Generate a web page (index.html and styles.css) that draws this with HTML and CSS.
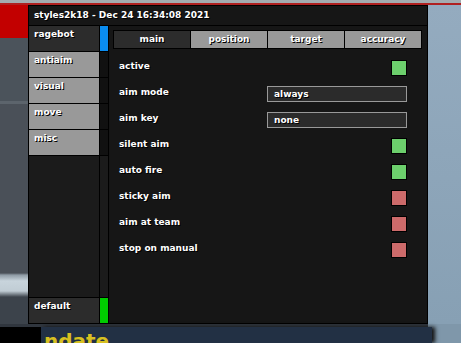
FILE: index.html
```html
<!DOCTYPE html>
<html lang="en">
<head>
    <meta charset="UTF-8">
    <title>styles2k18</title>
    <link rel="stylesheet" href="styles.css">
</head>
<body>
    <div class="top-strip"></div>
    <div class="middle">
        <div class="left-strip"></div>
        <div class="window">
            <div class="title">styles2k18 - Dec 24 16:34:08 2021</div>
            <div class="window-body">
                <div class="sidebar">
                    <div class="tab active"><span class="tab-name">ragebot</span><span class="mark blue"></span></div>
                    <div class="tab"><span class="tab-name">antiaim</span><span class="mark"></span></div>
                    <div class="tab"><span class="tab-name">visual</span><span class="mark"></span></div>
                    <div class="tab"><span class="tab-name">move</span><span class="mark"></span></div>
                    <div class="tab"><span class="tab-name">misc</span><span class="mark"></span></div>
                    <div class="spacer"><span class="tab-name"></span><span class="mark"></span></div>
                    <div class="tab active config"><span class="tab-name">default</span><span class="mark green"></span></div>
                </div>
                <div class="content">
                    <div class="subtabs">
                        <div class="subtab active">main</div>
                        <div class="subtab">position</div>
                        <div class="subtab">target</div>
                        <div class="subtab">accuracy</div>
                    </div>
                    <div class="rows">
                        <div class="row"><span class="label">active</span><span class="check on"></span></div>
                        <div class="row"><span class="label">aim mode</span><span class="select">always</span></div>
                        <div class="row"><span class="label">aim key</span><span class="select">none</span></div>
                        <div class="row"><span class="label">silent aim</span><span class="check on"></span></div>
                        <div class="row"><span class="label">auto fire</span><span class="check on"></span></div>
                        <div class="row"><span class="label">sticky aim</span><span class="check off"></span></div>
                        <div class="row"><span class="label">aim at team</span><span class="check off"></span></div>
                        <div class="row"><span class="label">stop on manual</span><span class="check off"></span></div>
                    </div>
                </div>
            </div>
        </div>
        <div class="right-strip"></div>
    </div>
    <div class="bottom">
        <div class="bottom-box"></div>
        <div class="bottom-panel"><span class="hud-text">ndate</span></div>
    </div>
</body>
</html>
```

FILE: styles.css
```css
/* page backdrop */
body {
    margin: 0;
    padding: 0;
    width: 461px;
    height: 343px;
    overflow: hidden;
    background-color: #8ea6ba;
    font-family: "DejaVu Sans", Verdana, sans-serif;
    font-weight: bold;
    font-size: 9px;
    color: #fff;
}

.top-strip {
    height: 5px;
    background: linear-gradient(to bottom, #a4acb0 0, #a4acb0 3px, #b02020 3px, #b02020 5px);
}

.middle {
    display: flex;
    height: 319px;
}

.left-strip {
    width: 28px;
    background: linear-gradient(to bottom,
        #c20000 0, #c20000 33px,
        #4b535b 33px, #4b535b 96px,
        #5c646c 96px, #5c646c 99px,
        #4a5058 99px, #4a5058 268px,
        #8e9aa4 270px, #c8d4dc 276px, #c0ccd4 286px,
        #3c434b 292px, #3c434b 319px);
}

.right-strip {
    flex: 1;
    background: linear-gradient(to bottom, #94abbf, #87a0b4);
}

/* cheat window */
.window {
    width: 398px;
    border: 1px solid #000;
    background-color: #161616;
    display: flex;
    flex-direction: column;
}

.title {
    height: 19px;
    line-height: 19px;
    padding-left: 5px;
    border-bottom: 1px solid #000;
    text-shadow: 1px 1px 0 #000;
}

.window-body {
    flex: 1;
    display: flex;
}

.sidebar {
    width: 79px;
    border-right: 1px solid #000;
    background-color: #1b1b1b;
    display: flex;
    flex-direction: column;
}

.tab {
    height: 25px;
    display: flex;
    border-bottom: 1px solid #000;
}

.tab-name {
    width: 65px;
    padding: 3px 0 0 5px;
    background-color: #999;
    text-shadow: 1px 1px 0 #000;
    border-right: 1px solid #000;
}

.tab.active .tab-name {
    background-color: #2c2c2c;
}

.mark {
    flex: 1;
    background-color: #111;
}

.mark.blue {
    background-color: #0a8cf0;
}

.mark.green {
    background-color: #00cc00;
}

.spacer {
    flex: 1;
    display: flex;
}

.spacer .tab-name,
.spacer .mark {
    background-color: #1b1b1b;
}

.config {
    border-top: 1px solid #000;
    border-bottom: none;
    height: 25px;
}

.content {
    flex: 1;
    padding: 4px 5px 0 4px;
}

.subtabs {
    display: flex;
    height: 17px;
    border: 1px solid #000;
}

.subtab {
    flex: 1;
    text-align: center;
    line-height: 16px;
    background-color: #999;
    border-left: 1px solid #000;
    text-shadow: 1px 1px 0 #000;
}

.subtab:first-child {
    border-left: none;
}

.subtab.active {
    background-color: #2c2c2c;
}

.rows {
    padding: 11px 15px 0 6px;
}

.row {
    height: 26px;
    display: flex;
    justify-content: space-between;
    align-items: flex-start;
}

.label {
    padding-top: 1px;
    text-shadow: 1px 1px 0 #000;
}

.check {
    width: 14px;
    height: 14px;
    border: 1px solid #000;
}

.check.on {
    background-color: #6ccf6c;
}

.check.off {
    background-color: #cc6a6a;
}

.select {
    width: 132px;
    height: 14px;
    line-height: 14px;
    padding-left: 6px;
    border: 1px solid #999;
    background-color: #2b2b2b;
    text-shadow: 1px 1px 0 #000;
}

/* game hud behind */
.bottom {
    display: flex;
    height: 16px;
    padding-top: 3px;
    background: linear-gradient(to right, #30363e 0, #30363e 428px, #7f97aa 428px);
}

.bottom-box {
    width: 41px;
    background-color: #000;
}

.bottom-panel {
    width: 388px;
    background-color: #223044;
    box-shadow: 3px 0 4px #111;
    overflow: hidden;
    padding-left: 3px;
}

.hud-text {
    display: block;
    color: #d8c020;
    font-size: 20px;
    line-height: 16px;
    padding-top: 6px;
}
```
